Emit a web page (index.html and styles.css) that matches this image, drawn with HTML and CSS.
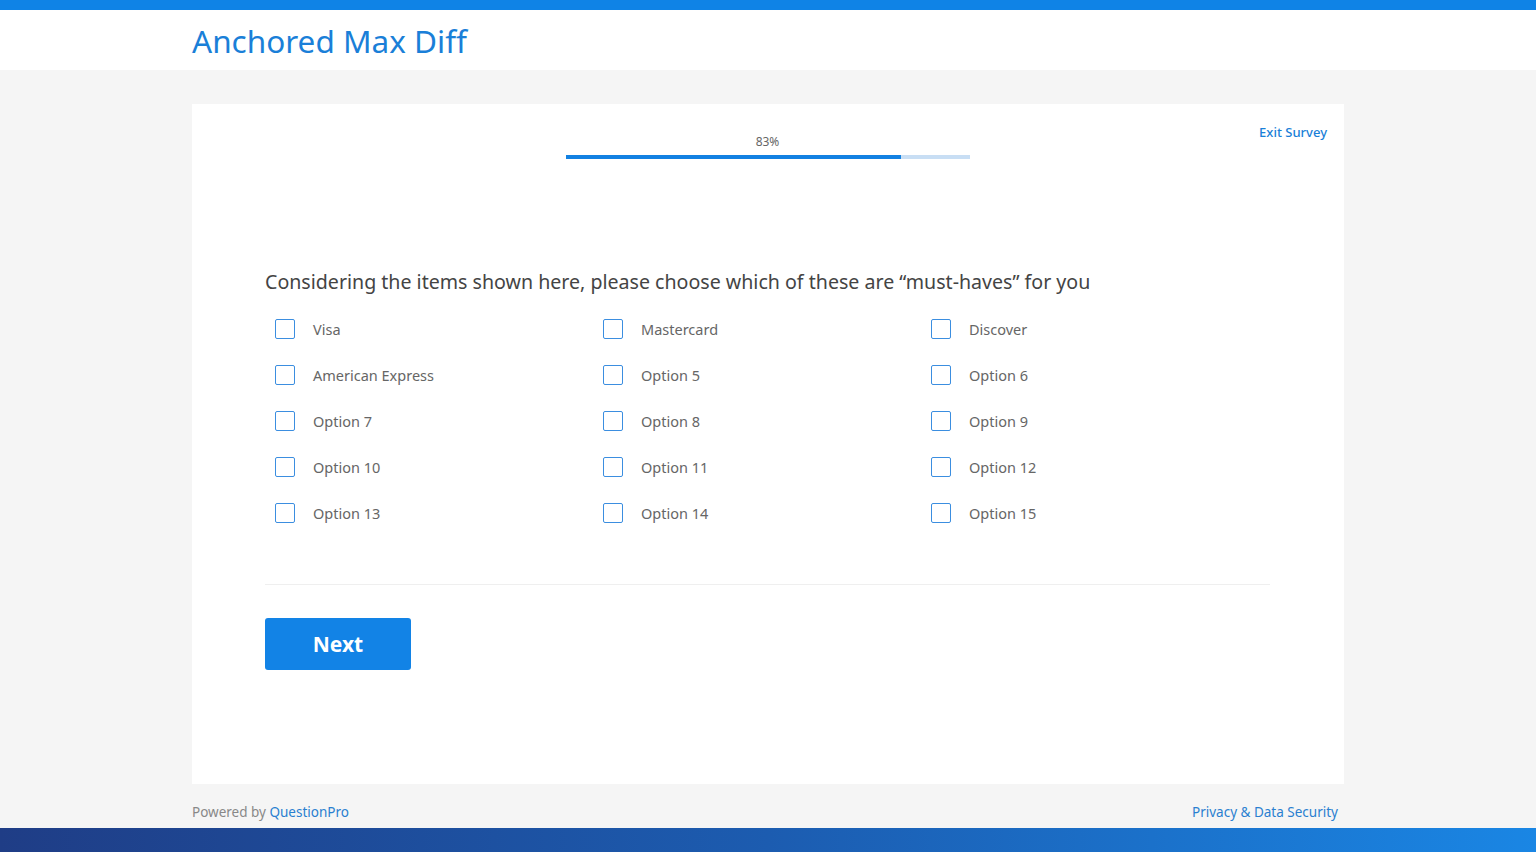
FILE: index.html
```html
<!DOCTYPE html>
<html lang="en">
<head>
    <meta charset="UTF-8">
    <meta name="viewport" content="width=device-width, initial-scale=1.0">
    <title>Anchored Max Diff</title>
    <link rel="stylesheet" href="styles.css">
</head>
<body>

<div class="topbar"></div>

<!-- Cabecera -->
<div class="header">
    <h1 class="survey-title">Anchored Max Diff</h1>
</div>

<div class="page">
    <div class="card">
        <div class="card-top">
            <div class="progress">
                <div class="progress-label">83%</div>
                <div class="progress-track"><div class="progress-fill" style="width: 83%"></div></div>
            </div>
            <a class="exit-link" href="#">Exit Survey</a>
        </div>

        <div class="question">
            <p class="question-text">Considering the items shown here, please choose which of these are “must-haves” for you</p>
            <div class="options">
                <label class="option"><span class="box"></span>Visa</label>
                <label class="option"><span class="box"></span>Mastercard</label>
                <label class="option"><span class="box"></span>Discover</label>
                <label class="option"><span class="box"></span>American Express</label>
                <label class="option"><span class="box"></span>Option 5</label>
                <label class="option"><span class="box"></span>Option 6</label>
                <label class="option"><span class="box"></span>Option 7</label>
                <label class="option"><span class="box"></span>Option 8</label>
                <label class="option"><span class="box"></span>Option 9</label>
                <label class="option"><span class="box"></span>Option 10</label>
                <label class="option"><span class="box"></span>Option 11</label>
                <label class="option"><span class="box"></span>Option 12</label>
                <label class="option"><span class="box"></span>Option 13</label>
                <label class="option"><span class="box"></span>Option 14</label>
                <label class="option"><span class="box"></span>Option 15</label>
            </div>
        </div>

        <div class="divider"></div>

        <button class="next-btn">Next</button>
    </div>

    <div class="footer">
        <span>Powered by <a href="#" class="brand">QuestionPro</a></span>
        <a href="#" class="privacy">Privacy &amp; Data Security</a>
    </div>
</div>

<div class="bottombar"></div>

</body>
</html>
```

FILE: styles.css
```css
body {
    margin: 0;
    font-family: "Noto Sans", "Open Sans", sans-serif;
    background-color: #f5f5f5;
    color: #555;
}
a {
    text-decoration: none;
}
.topbar {
    height: 10px;
    background-color: #0f83e6;
}
.header {
    height: 60px;
    background-color: #fff;
    padding-left: 192px;
}
.survey-title {
    margin: 0;
    font-size: 31.5px;
    font-weight: 400;
    color: #1a7fd8;
    line-height: 62px;
}
.page {
    padding: 34px 192px 0 192px;
}
.card {
    background-color: #fff;
    height: 680px;
    box-sizing: border-box;
    padding: 30px 74px 0 73px;
}
.card-top {
    position: relative;
    display: flex;
    justify-content: center;
}
.progress {
    width: 404px;
}
.progress-label {
    text-align: center;
    font-size: 12px;
    color: #666;
    line-height: 16px;
    margin-bottom: 5px;
}
.progress-track {
    height: 4px;
    background-color: #c8def4;
}
.progress-fill {
    height: 4px;
    background-color: #1281e2;
}
.exit-link {
    position: absolute;
    right: -57px;
    top: -11px;
    font-size: 13px;
    font-weight: 500;
    color: #1a7fd8;
}
.question {
    margin-top: 110px;
}
.question-text {
    margin: 0 0 22px 0;
    font-size: 19.6px;
    color: #444;
    line-height: 26px;
}
.options {
    display: grid;
    grid-template-columns: 328px 328px 328px;
    row-gap: 22px;
    padding-left: 10px;
}
.option {
    display: flex;
    align-items: center;
    font-size: 14.5px;
    color: #666;
    line-height: 24px;
}
.box {
    width: 18px;
    height: 18px;
    border: 1.5px solid #3b8ee0;
    border-radius: 2px;
    margin-right: 18px;
    flex: none;
}
.divider {
    margin-top: 59px;
    height: 1px;
    background-color: #efefef;
}
.next-btn {
    margin-top: 33px;
    width: 146px;
    height: 52px;
    background-color: #1283e6;
    color: #fff;
    border: none;
    border-radius: 3px;
    font-family: inherit;
    font-size: 21px;
    font-weight: 700;
    cursor: pointer;
}
.footer {
    display: flex;
    justify-content: space-between;
    padding: 18px 6px 6px 0;
    font-size: 13.5px;
    color: #888;
    line-height: 20px;
}
.brand, .privacy {
    color: #2a7fd0;
}
.bottombar {
    height: 24px;
    background: linear-gradient(to right, #1f3d86, #1c5cb0 50%, #1a86e4);
}
```
